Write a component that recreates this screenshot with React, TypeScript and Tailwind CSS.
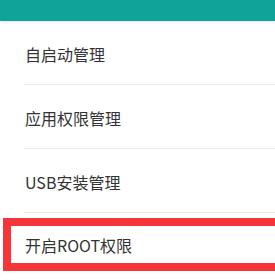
const items = ['自启动管理', '应用权限管理', 'USB安装管理']

export default function App() {
  return (
    <div className="w-[275px] h-[280px] overflow-hidden bg-white font-['Noto_Sans_CJK_SC',sans-serif] text-[#333]">
      <div className="h-[21px] bg-[#0fa39a] shadow-[0_1px_3px_rgba(0,0,0,0.12)]" />
      {items.map((label, i) => (
        <div key={i} className="h-[64px] pl-[25px] flex flex-col">
          <div className="flex-1 flex items-center text-[16px] leading-none pt-[3px]">{label}</div>
          <div className="h-px ml-[-1px] bg-[#ececec]" />
        </div>
      ))}
      <div className="mt-[5px] ml-[3px] mr-[-10px] h-[53px] border-[8px] border-[#f53538] flex items-center pl-[14px] text-[16px] leading-none">
        开启ROOT权限
      </div>
    </div>
  )
}
